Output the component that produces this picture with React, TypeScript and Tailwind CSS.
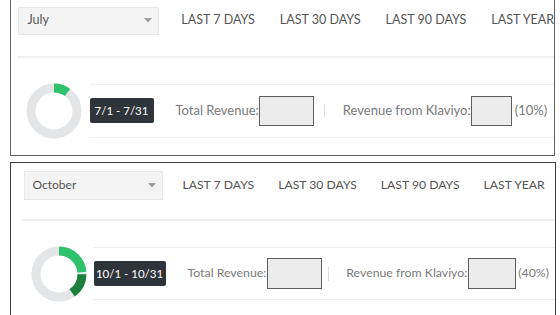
import React from 'react';

type Seg = { from: number; to: number; color: string };

function Donut({ segs }: { segs: Seg[] }) {
    const r = 23;
    const c = 2 * Math.PI * r;
    return (
        <svg width="56" height="56" viewBox="0 0 56 56" className="shrink-0">
            <circle cx="28" cy="28" r={r} fill="none" stroke="#e4e5e7" strokeWidth="9" />
            {segs.map((s, i) => (
                <circle
                    key={i}
                    cx="28"
                    cy="28"
                    r={r}
                    fill="none"
                    stroke={s.color}
                    strokeWidth="9"
                    strokeDasharray={`${(s.to - s.from) * c} ${c}`}
                    strokeDashoffset={-s.from * c}
                    transform="rotate(-90 28 28)"
                />
            ))}
        </svg>
    );
}

function Caret() {
    return (
        <svg width="8" height="5" viewBox="0 0 8 5">
            <path d="M0 0 L8 0 L4 4.5 Z" fill="#9a9a9a" />
        </svg>
    );
}

const tabs = ['LAST 7 DAYS', 'LAST 30 DAYS', 'LAST 90 DAYS', 'LAST YEAR'];

function App() {
    return (
        <div className="w-[560px] h-[315px] overflow-hidden bg-white font-['Lato',sans-serif] text-[#555]">
            {/* July panel */}
            <div className="ml-[10px] -mt-[2px] w-[545px] h-[158px] border-[1.5px] border-[#5e5e5e] overflow-hidden">
                <div className="flex items-center pt-[7.5px] pl-[6.5px]">
                    <div className="flex items-center justify-between w-[144px] h-[28px] pl-[9px] pr-[6px] bg-[#f4f4f4] border border-[#e8e8e8] text-[12.5px]">
                        <span>July</span>
                        <Caret />
                    </div>
                    <div className="flex gap-[25px] ml-[22px] text-[12.5px] whitespace-nowrap">
                        {tabs.map((t) => (
                            <span key={t}>{t}</span>
                        ))}
                    </div>
                </div>
                <div className="ml-[6px] mt-[21px] border-t-2 border-[#f0f0f0]" />
                <div className="flex items-center mt-[25px] pl-[14.5px]">
                    <Donut segs={[{ from: 0, to: 0.1, color: '#2dc26b' }]} />
                    <div className="flex-1 flex items-center ml-[8px] h-[54px] border-y border-[#efefef] text-[13px] text-[#7a7a7a] whitespace-nowrap">
                        <div className="flex items-center justify-center w-[64px] h-[25px] bg-[#2f343a] text-white text-[11.5px] rounded-[2px]">
                            7/1 - 7/31
                        </div>
                        <span className="ml-[22px]">Total Revenue:</span>
                        <div className="w-[55px] h-[30px] bg-[#ececec] border border-[#5e5e5e]" />
                        <div className="ml-[10px] w-px h-[14px] bg-[#dedede]" />
                        <span className="ml-[18px]">Revenue from Klaviyo:</span>
                        <div className="w-[41px] h-[30px] bg-[#ececec] border border-[#5e5e5e]" />
                        <span className="ml-[3px]">(10%)</span>
                    </div>
                </div>
            </div>

            {/* October panel */}
            <div className="ml-[10px] mt-[6px] w-[546px] h-[160px] border-[1.5px] border-[#3e3e3e] overflow-hidden">
                <div className="flex items-center pt-[7.5px] pl-[12.5px]">
                    <div className="flex items-center justify-between w-[139px] h-[29px] pl-[8px] pr-[6px] bg-[#f4f4f4] border border-[#e8e8e8] text-[12px]">
                        <span>October</span>
                        <Caret />
                    </div>
                    <div className="flex gap-[24px] ml-[20px] text-[12.2px] whitespace-nowrap">
                        {tabs.map((t) => (
                            <span key={t}>{t}</span>
                        ))}
                    </div>
                </div>
                <div className="ml-[10.5px] mt-[19px] border-t-2 border-[#f0f0f0]" />
                <div className="flex items-center mt-[25px] pl-[19.5px]">
                    <Donut
                        segs={[
                            { from: 0, to: 0.235, color: '#2dc26b' },
                            { from: 0.25, to: 0.4, color: '#1b7f3e' },
                        ]}
                    />
                    <div className="flex-1 flex items-center ml-[6px] h-[53px] border-y border-[#efefef] text-[12.3px] text-[#7a7a7a] whitespace-nowrap">
                        <div className="flex items-center justify-center w-[72px] h-[25px] ml-[1px] bg-[#2f343a] text-white text-[11.5px] rounded-[2px]">
                            10/1 - 10/31
                        </div>
                        <span className="ml-[22px]">Total Revenue:</span>
                        <div className="ml-[1px] w-[55px] h-[31px] bg-[#ececec] border border-[#5e5e5e]" />
                        <div className="ml-[6px] w-px h-[14px] bg-[#dedede]" />
                        <span className="ml-[17px]">Revenue from Klaviyo:</span>
                        <div className="ml-[1px] w-[48px] h-[31px] bg-[#ececec] border border-[#5e5e5e]" />
                        <span className="ml-[2px]">(40%)</span>
                    </div>
                </div>
            </div>
        </div>
    );
}

export default App;
